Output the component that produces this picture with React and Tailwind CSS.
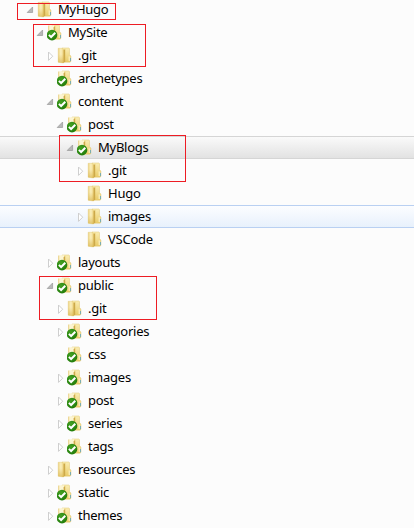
const rows = [
  { name: 'MyHugo', level: 0, arrow: 'open' },
  { name: 'MySite', level: 1, arrow: 'open', check: true },
  { name: '.git', level: 2, arrow: 'closed' },
  { name: 'archetypes', level: 2, check: true },
  { name: 'content', level: 2, arrow: 'open', check: true },
  { name: 'post', level: 3, arrow: 'open', check: true },
  { name: 'MyBlogs', level: 4, arrow: 'open', check: true, state: 'selected' },
  { name: '.git', level: 5, arrow: 'closed' },
  { name: 'Hugo', level: 5 },
  { name: 'images', level: 5, arrow: 'closed', state: 'hover' },
  { name: 'VSCode', level: 5 },
  { name: 'layouts', level: 2, arrow: 'closed', check: true },
  { name: 'public', level: 2, arrow: 'open', check: true },
  { name: '.git', level: 3, arrow: 'closed' },
  { name: 'categories', level: 3, arrow: 'closed', check: true },
  { name: 'css', level: 3, check: true },
  { name: 'images', level: 3, arrow: 'closed', check: true },
  { name: 'post', level: 3, arrow: 'closed', check: true },
  { name: 'series', level: 3, arrow: 'closed', check: true },
  { name: 'tags', level: 3, arrow: 'closed', check: true },
  { name: 'resources', level: 2, arrow: 'closed' },
  { name: 'static', level: 2, arrow: 'closed', check: true },
  { name: 'themes', level: 2, arrow: 'closed', check: true },
];

const stateClass = {
  selected: 'border-[#d5d5d5] bg-linear-to-b from-[#fafafa] to-[#e2e2e2]',
  hover: 'border-[#b9d0f2] bg-linear-to-b from-[#fcfdff] to-[#e8f1fc]',
};

function Arrow({ type }) {
  return (
    <svg className="h-[21px] w-[9px] shrink-0" viewBox="0 1 9 21">
      {type === 'open' && <path d="M6.6 9V14.5H1.2Z" fill="#b8b8b8" stroke="#999" strokeWidth=".7" />}
      {type === 'closed' && <path d="M2.5 8L6.7 12.2L2.5 16.4Z" fill="#fff" stroke="#cfcfcf" />}
    </svg>
  );
}

function Folder({ check }) {
  return (
    <svg className="ml-[2px] h-[21px] w-[16px] shrink-0" viewBox="0 1 16 21">
      <defs>
        <linearGradient id="front" x1="0" x2="1" y1="0" y2="0">
          <stop offset="0" stopColor="#efd582" />
          <stop offset=".5" stopColor="#fbf0bf" />
          <stop offset="1" stopColor="#ecd079" />
        </linearGradient>
        <linearGradient id="back" x1="0" x2="0" y1="0" y2="1">
          <stop offset="0" stopColor="#faedb2" />
          <stop offset="1" stopColor="#e9cb68" />
        </linearGradient>
        <linearGradient id="shade" x1="0" x2="0" y1="0" y2="1">
          <stop offset=".4" stopColor="#d9b44a" stopOpacity="0" />
          <stop offset="1" stopColor="#d3ab3c" stopOpacity=".6" />
        </linearGradient>
        <radialGradient id="badge" cx=".4" cy=".3" r=".8">
          <stop offset="0" stopColor="#43a022" />
          <stop offset="1" stopColor="#1d7808" />
        </radialGradient>
      </defs>
      <path d="M5 4H11.9L12.5 4.6V10.6L13.9 12V17.4L13 18.2H5Z" fill="url(#back)" stroke="#e3c977" strokeWidth=".5" />
      {check && <path d="M2 4.3H7V11H2Z" fill="#fcf5d2" />}
      {!check && (
        <>
          <path d="M1.2 4.3H5.4L6.6 5.4V19L1.2 18.3Z" fill="url(#front)" stroke="#dfc471" strokeWidth=".4" />
          <path d="M1.2 4.3H5.4L6.6 5.4V19L1.2 18.3Z" fill="url(#shade)" />
        </>
      )}
      <path d="M6.6 6.6L8.2 4.8V17.2L6.6 19Z" fill="#cda949" />
      <path d="M12.2 12.4V17" stroke="#fdf6cf" strokeWidth="1" />
      <path d="M13.5 14V17.2" stroke="#6fa9b5" strokeWidth=".9" />
      {check && (
        <>
          <path d="M1.2 11V4.6H2.2V11Z" fill="#e9cf80" />
          <circle cx="5" cy="14.1" r="5.3" fill="url(#badge)" />
          <path d="M1.9 13.9L4.1 16L8.3 11.8" fill="none" stroke="#fff" strokeWidth="2" />
        </>
      )}
    </svg>
  );
}

function Row({ name, level, arrow, check, state }) {
  return (
    <div className={`flex h-[23px] shrink-0 items-center border-y ${stateClass[state] || 'border-transparent'}`}>
      <div className="shrink-0" style={{ width: 26 + level * 10 }} />
      <Arrow type={arrow} />
      <Folder check={check} />
      <span className="ml-[5px] text-[13px] leading-[21px] tracking-[-0.25px] whitespace-pre text-black">{name}</span>
    </div>
  );
}

export default function App() {
  return (
    <div className="relative h-[528px] w-[414px] overflow-hidden bg-[#fcfcfc] font-['Noto_Sans','Open_Sans',sans-serif]">
      <div className="-mt-[2px] flex flex-col">
        {rows.map((row, i) => (
          <Row key={i} {...row} />
        ))}
      </div>
      <div className="absolute top-[3px] left-[17px] h-[17px] w-[99px] border border-[#ed1c24]" />
      <div className="absolute top-[24px] left-[33px] h-[43px] w-[113px] border border-[#ed1c24]" />
      <div className="absolute top-[135px] left-[59px] h-[47px] w-[127px] border border-[#ed1c24]" />
      <div className="absolute top-[276px] left-[39px] h-[44px] w-[118px] border border-[#ed1c24]" />
    </div>
  );
}
